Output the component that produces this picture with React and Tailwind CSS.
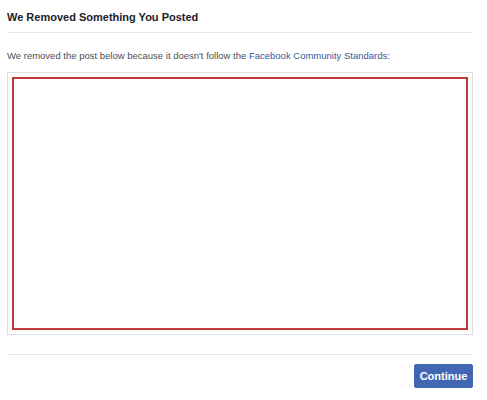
export default function App() {
  return (
    <div
      className="w-[487px] h-[400px] bg-white px-[7px] pr-[14px]"
      style={{ fontFamily: '"Liberation Sans", Arial, sans-serif' }}
    >
      {/* Header */}
      <div className="pt-[9px] pb-[7px] border-b border-[#e5e5e5]">
        <h2 className="text-[11px] leading-[16px] font-bold text-[#1d2129]">
          We Removed Something You Posted
        </h2>
      </div>

      {/* Body */}
      <p className="mt-[15px] text-[9.5px] leading-[16px] text-[#4b4f56]">
        We removed the post below because it doesn't follow the{' '}
        <a href="#" className="text-[#385898]">Facebook Community Standards</a>:
      </p>

      <div className="mt-[8px] border border-[#dddfe2] p-[4px]">
        <div className="h-[253px] border-2 border-[#c0393b]" />
      </div>

      {/* Footer */}
      <div className="mt-[19px] border-t border-[#e5e5e5] pt-[9px] flex justify-end">
        <button className="h-[24px] w-[59px] rounded-[2px] bg-[#4267b2] border border-[#4267b2] text-white text-[11px] font-bold leading-[22px]">
          Continue
        </button>
      </div>
    </div>
  );
}
